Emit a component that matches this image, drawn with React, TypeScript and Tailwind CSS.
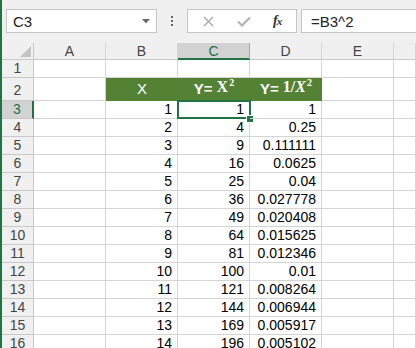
const cols = "grid grid-cols-[32px_72px_72px_72px_72px_72px_1fr]";
const line = "border-[#d4d4d4]";

const fmt = (n: number) => {
  const v = 1 / (n * n);
  if (v === 1) return "1";
  return String(parseFloat(v.toFixed(6)));
};

const Header = () => (
  <div className={`${cols} h-[17px] bg-[#f0f0f0] text-[14px] text-[#444]`}>
    <div className="relative border-r border-b border-[#c8c8c8]">
      <svg className="absolute right-[2px] bottom-[2px]" width="11" height="11" viewBox="0 0 11 11">
        <polygon points="11,0 11,11 0,11" fill="#c3c3c3" />
      </svg>
    </div>
    {["A", "B", "C", "D", "E", ""].map((c) =>
      c === "C" ? (
        <div key={c} className="flex items-center justify-center bg-[#d2d2d2] border-r border-[#ababab] border-b-2 border-b-[#217346] text-[#217346] leading-none pt-[1px]">
          {c}
        </div>
      ) : (
        <div key={c || "f"} className="flex items-center justify-center border-r border-b border-r-[#d4d4d4] border-b-[#c8c8c8] leading-none">
          {c}
        </div>
      )
    )}
  </div>
);

const RowHead = ({ n, active }: { n: number; active?: boolean }) =>
  active ? (
    <div className="flex items-end justify-center pb-[1px] bg-[#d2d2d2] border-b border-[#c8c8c8] border-r-2 border-r-[#217346] text-[#217346] text-[14px] leading-[16px]">
      {n}
    </div>
  ) : (
    <div className="flex items-end justify-center pb-[1px] bg-[#f0f0f0] border-b border-r border-[#c8c8c8] text-[#444] text-[14px] leading-[16px]">
      {n}
    </div>
  );

const Cell = ({ children, className = "" }: { children?: React.ReactNode; className?: string }) => (
  <div className={`relative flex items-end justify-end pr-[5px] pb-[1px] border-r border-b ${line} text-[14px] leading-[16px] text-black ${className}`}>
    {children}
  </div>
);

const Sq = () => <span className="text-[10px] relative -top-[6px] ml-[1px]">2</span>;

export default function App() {
  const rows = Array.from({ length: 14 }, (_, i) => i + 1);

  return (
    <div className="w-[416px] h-[348px] overflow-hidden bg-white border-l-2 border-[#217346] font-['Liberation_Sans',Arial,sans-serif]">
      {/* formula bar */}
      <div className="h-[43px] bg-[#f0f0f0] flex items-start pt-[9px] pl-[4px]">
        <div className="w-[151px] h-[24px] bg-white border border-[#c6c6c6] flex items-center justify-between pl-[6px] pr-[6px]">
          <span className="text-[15px] text-[#222] leading-none">C3</span>
          <svg width="8" height="5" viewBox="0 0 8 5">
            <polygon points="0,0 8,0 4,4.5" fill="#6b6b6b" />
          </svg>
        </div>
        <div className="w-[30px] h-[24px] flex flex-col items-center justify-center gap-[2px]">
          <span className="w-[2px] h-[2px] bg-[#666]" />
          <span className="w-[2px] h-[2px] bg-[#666]" />
          <span className="w-[2px] h-[2px] bg-[#666]" />
        </div>
        <div className="w-[110px] h-[24px] bg-white border border-[#c6c6c6] flex items-center">
          <svg className="ml-[15px]" width="11" height="11" viewBox="0 0 11 11">
            <path d="M1 1 L10 10 M10 1 L1 10" stroke="#a6a6a6" strokeWidth="1.3" />
          </svg>
          <svg className="ml-[23px]" width="14" height="11" viewBox="0 0 14 11">
            <path d="M1 5.5 L5 9.5 L13 1.5" stroke="#b3b3b3" strokeWidth="2.2" fill="none" />
          </svg>
          <span className="ml-[22px] font-['Liberation_Serif',serif] italic font-bold text-[14px] text-[#333] leading-none tracking-[-1px]">
            f<span className="text-[11px]">x</span>
          </span>
        </div>
        <div className="ml-[4px] flex-1 h-[24px] bg-white border border-r-0 border-[#c6c6c6] flex items-center pl-[9px]">
          <span className="text-[15px] text-[#222] leading-none">=B3^2</span>
        </div>
      </div>

      <Header />

      {/* row 1 */}
      <div className={`${cols} h-[18px]`}>
        <RowHead n={1} />
        <Cell />
        <Cell />
        <Cell />
        <Cell />
        <Cell />
        <Cell />
      </div>

      {/* row 2: table headings */}
      <div className={`${cols} h-[23px]`}>
        <div className="flex items-end justify-center pb-[2px] bg-[#f0f0f0] border-b border-r border-[#c8c8c8] text-[#444] text-[14px] leading-[16px]">
          2
        </div>
        <Cell />
        <div className="flex items-end justify-center pb-[3px] bg-[#548235] text-white text-[15px] leading-[16px] border-b border-[#548235]">
          X
        </div>
        <div className="flex items-end justify-center pb-[3px] bg-[#548235] text-white text-[15px] leading-[16px] border-b border-[#548235]">
          <span className="font-bold">Y=</span>
          <span className="ml-[4px] font-['Liberation_Serif',serif] font-bold text-[16px]">
            X
            <Sq />
          </span>
        </div>
        <div className="flex items-end justify-center pb-[3px] bg-[#548235] text-white text-[15px] leading-[16px] border-b border-[#548235]">
          <span className="font-bold">Y=</span>
          <span className="ml-[4px] font-['Liberation_Serif',serif] font-bold text-[16px]">
            1/<i>X</i>
            <Sq />
          </span>
        </div>
        <Cell />
        <Cell />
      </div>

      {rows.map((n) => (
        <div key={n} className={`${cols} h-[18px] ${n === 1 ? "relative z-10" : ""}`}>
          <RowHead n={n + 2} active={n === 1} />
          <Cell />
          <Cell>{n}</Cell>
          <Cell>
            {n * n}
            {n === 1 && (
              <>
                <div className="absolute -left-[1px] -top-[1px] w-[74px] h-[19px] border-2 border-[#217346]" />
                <div className="absolute -right-[5px] -bottom-[5px] w-[8px] h-[8px] bg-[#217346] border border-white" />
              </>
            )}
          </Cell>
          <Cell>{fmt(n)}</Cell>
          <Cell />
          <Cell />
        </div>
      ))}
    </div>
  );
}
